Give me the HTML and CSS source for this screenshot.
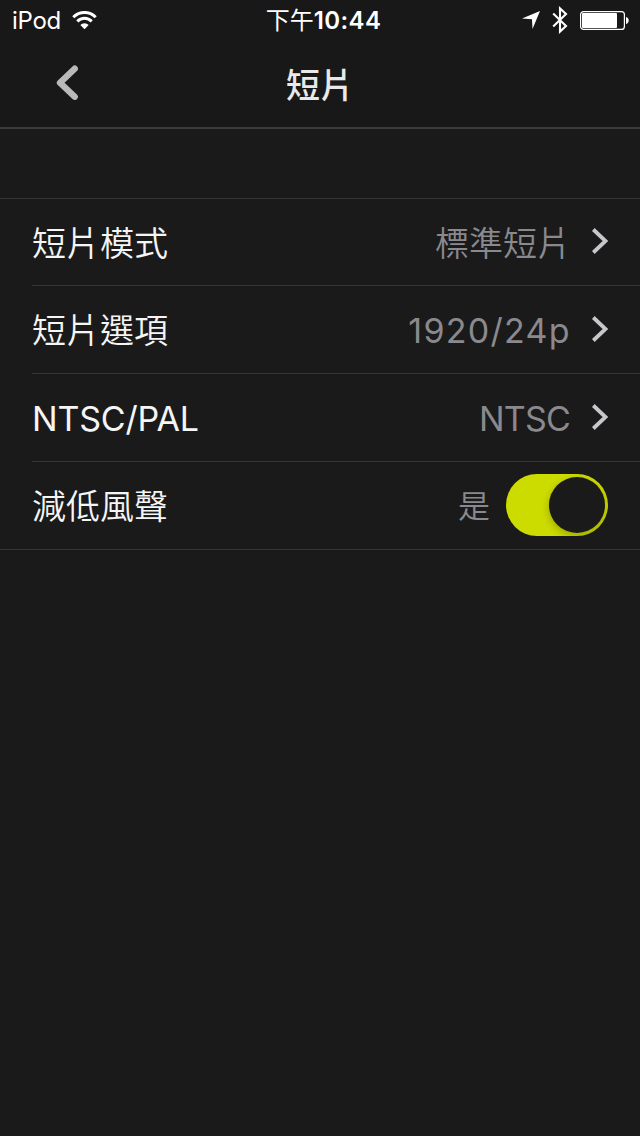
FILE: index.html
```html
<!DOCTYPE html>
<html lang="zh-Hant">
<head>
  <meta charset="UTF-8" />
  <meta name="viewport" content="width=device-width, initial-scale=1.0"/>
  <title>短片</title>
  <link rel="stylesheet" href="styles.css">
</head>
<body>

<div class="status-bar">
  <div class="status-left">
    <span class="device">iPod</span>
    <svg class="wifi" width="25" height="19" viewBox="0 0 25 19">
      <path d="M1.3 6.2 A15.6 15.6 0 0 1 23.7 6.2" fill="none" stroke="#fff" stroke-width="3"/>
      <path d="M5.3 10.4 A10 10 0 0 1 19.7 10.4" fill="none" stroke="#fff" stroke-width="3"/>
      <path d="M12.5 18.2 L8.3 13.9 A6 6 0 0 1 16.7 13.9 Z" fill="#fff"/>
    </svg>
  </div>
  <div class="clock"><span class="clock-cjk">下午</span>10:44</div>
  <div class="status-right">
    <svg width="18" height="18" viewBox="0 0 18 18">
      <path d="M18 0 L10.5 18 L10 8.2 L0 7.5 Z" fill="#fff"/>
    </svg>
    <svg class="bluetooth" width="16" height="28" viewBox="0 0 16 28">
      <path d="M1.2 7.5 L14 20 L8 25.5 V2.5 L14 8 L1.2 20.5" fill="none" stroke="#fff" stroke-width="2.1"/>
    </svg>
    <svg class="battery" width="49" height="19" viewBox="0 0 49 19">
      <rect x="0.6" y="0.6" width="43.8" height="17.8" rx="3" fill="none" stroke="#fff" stroke-width="1.2"/>
      <rect x="2" y="2" width="35" height="15" rx="1" fill="#fff"/>
      <path d="M46 6 C49.6 6.5 49.6 12.5 46 13 Z" fill="#fff"/>
    </svg>
  </div>
</div>

<header class="nav">
  <svg class="back" width="23" height="37" viewBox="0 0 23 37">
    <path d="M18.7 3.7 L4 17.7 L18.7 31.7" fill="none" stroke="#b9b9b9" stroke-width="6.4" stroke-linecap="round" stroke-linejoin="round"/>
  </svg>
  <h1>短片</h1>
</header>

<ul class="settings">
  <li class="row">
    <span class="label">短片模式</span>
    <span class="value">標準短片</span>
    <svg class="arrow" width="16" height="26" viewBox="0 0 16 26"><path d="M1.3 1.5 L13.5 13 L1.3 24.5"/></svg>
  </li>
  <li class="row">
    <span class="label">短片選項</span>
    <span class="value latin value-size">1920/24p</span>
    <svg class="arrow" width="16" height="26" viewBox="0 0 16 26"><path d="M1.3 1.5 L13.5 13 L1.3 24.5"/></svg>
  </li>
  <li class="row">
    <span class="label latin">NTSC/PAL</span>
    <span class="value latin value-system">NTSC</span>
    <svg class="arrow" width="16" height="26" viewBox="0 0 16 26"><path d="M1.3 1.5 L13.5 13 L1.3 24.5"/></svg>
  </li>
  <li class="row">
    <span class="label">減低風聲</span>
    <span class="value value-switch">是</span>
    <span class="switch"><span class="knob"></span></span>
  </li>
</ul>

</body>
</html>
```
FILE: styles.css
```css
* {
  box-sizing: border-box;
}

body {
  margin: 0;
  min-height: 100vh;
  background-color: #1a1a1a;
  color: #f5f5f5;
  font-family: Inter, "Noto Sans CJK TC", sans-serif;
}

svg {
  display: block;
  flex: none;
}

.status-bar {
  display: grid;
  grid-template-columns: 1fr auto 1fr;
  align-items: center;
  height: 40px;
  padding: 0 11px 0 12px;
  background-color: #181818;
  color: #fff;
}

.status-left,
.status-right {
  display: flex;
  align-items: center;
}

.device {
  padding-top: 2px;
  font-size: 24px;
  line-height: 38px;
  letter-spacing: -0.3px;
}

.wifi {
  margin-left: 11px;
}

.clock {
  padding: 2px 0 0 6px;
  font-size: 24px;
  font-weight: 600;
  line-height: 38px;
  letter-spacing: 0.4px;
  white-space: nowrap;
}

.clock-cjk {
  font-weight: 400;
  letter-spacing: 0;
}

.status-right {
  justify-content: flex-end;
}

.bluetooth {
  margin-left: 12px;
}

.battery {
  margin-left: 12px;
}

.nav {
  display: grid;
  grid-template-columns: 120px 1fr 120px;
  align-items: center;
  height: 89px;
  background-color: #181818;
  border-bottom: 2px solid #3c3c3c;
}

.back {
  margin-left: 56px;
}

.nav h1 {
  margin: 0;
  padding-top: 4px;
  color: #e9e9e9;
  font-size: 34px;
  font-weight: 500;
  line-height: 50px;
  text-align: center;
}

.settings {
  margin: 69px 0 0;
  padding: 0;
  list-style: none;
  border-top: 1px solid #353535;
  border-bottom: 1px solid #353535;
}

.row {
  display: flex;
  align-items: center;
  height: 88px;
  margin-left: 32px;
  padding: 0 32px 2px 0;
  border-bottom: 1px solid #353535;
  font-size: 34px;
  font-weight: 350;
}

.row:first-child {
  height: 87px;
}

.row:last-child {
  height: 87px;
  border-bottom: none;
}

.label {
  flex: 1;
}

.value {
  margin-right: 21px;
  color: #8a898e;
}

.latin {
  padding-top: 3px;
  font-weight: 400;
}

.label.latin {
  letter-spacing: -0.2px;
}

.value-size {
  letter-spacing: 1.3px;
}

.value-system {
  margin-right: 22px;
  letter-spacing: -0.8px;
}

.arrow path {
  fill: none;
  stroke: #c7c7cc;
  stroke-width: 3.8;
}

.value-switch {
  margin-right: 16px;
  padding-bottom: 2px;
  font-size: 32px;
}

.switch {
  display: flex;
  justify-content: flex-end;
  width: 102px;
  height: 62px;
  padding: 3px;
  overflow: hidden;
  border-radius: 31px;
  background-color: #cddc00;
}

.knob {
  width: 56px;
  height: 56px;
  border-radius: 50%;
  background-color: #1a1a1a;
  box-shadow: 0 3px 8px rgba(0, 0, 0, 0.25);
}
```
